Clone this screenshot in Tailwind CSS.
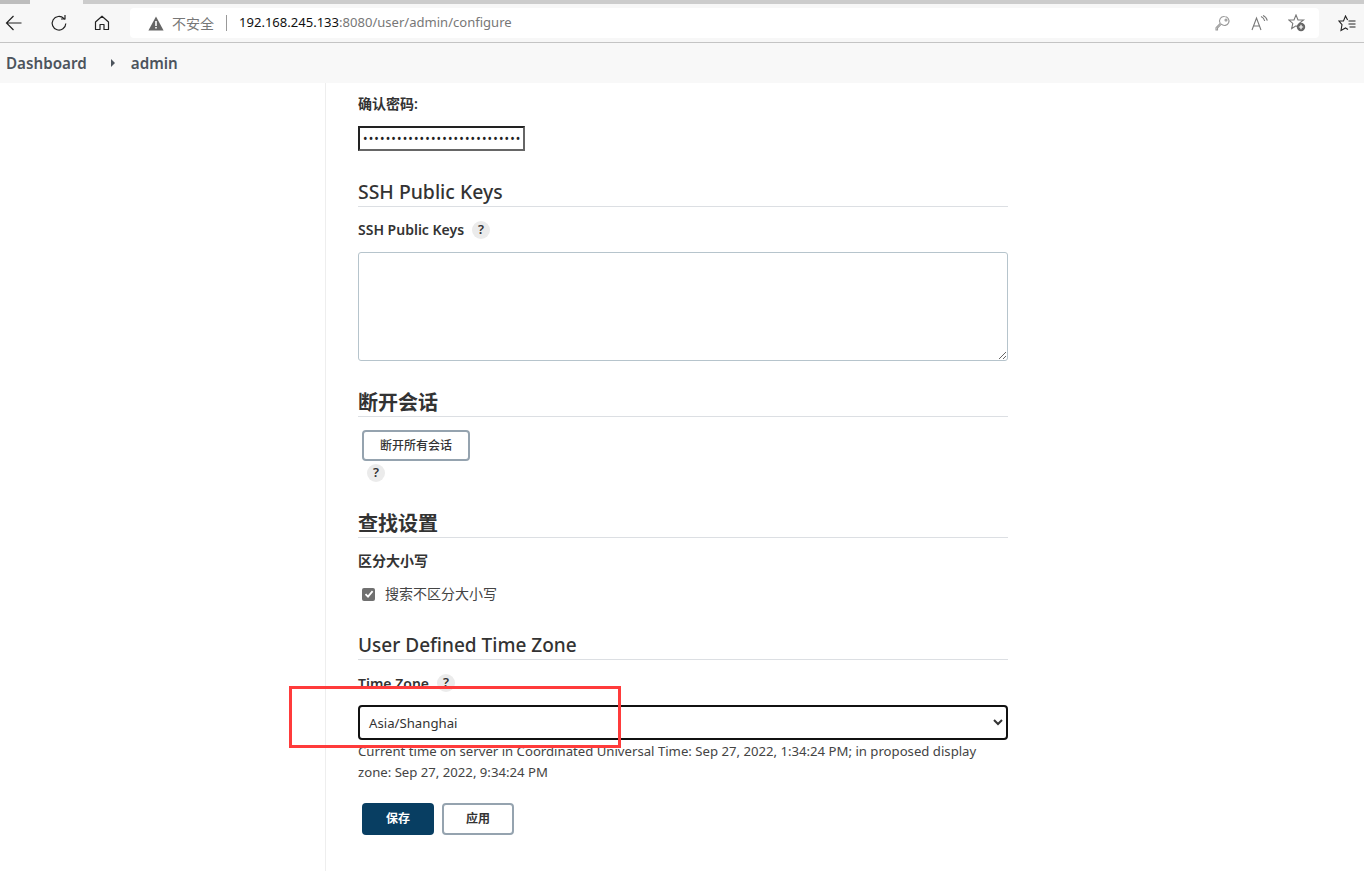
<!DOCTYPE html>
<html lang="zh-CN">
<head>
<meta charset="utf-8">
<title>admin configure</title>
<script src="https://cdn.jsdelivr.net/npm/@tailwindcss/browser@4"></script>
</head>
<body class="relative h-[871px] w-[1364px] overflow-hidden bg-white font-['Noto_Sans','Noto_Sans_CJK_SC',sans-serif] text-[#333]">
<!-- tab strip -->
<div class="flex h-[4px] bg-[#cccccc]">
  <div class="w-[30px] bg-[#bdbdbd]"></div>
  <div class="w-[53px] bg-[#f7f7f7]"></div>
</div>
<!-- toolbar -->
<div class="flex h-[39px] items-center border-b border-[#c4c4c4] bg-[#f7f7f7]">
  <div class="flex w-[130px] items-center">
    <svg class="ml-[5px]" width="18" height="18" viewBox="0 0 18 18" fill="none" stroke="#222" stroke-width="1.2"><path d="M1.5 9H16.5M8.5 2L1.5 9L8.5 16"/></svg>
    <svg class="ml-[27px]" width="18" height="18" viewBox="0 0 18 18" fill="none" stroke="#222" stroke-width="1.2"><path d="M15 1V5H11M15.8 9.5A6.8 6.8 0 1 1 13.8 4.4L15 5.5"/></svg>
    <svg class="ml-[26px]" width="16" height="16" viewBox="0 0 16 16" fill="none" stroke="#222" stroke-width="1.2"><path d="M1.5 7L8 1.2L14.5 7V14.5H10V9.5H6V14.5H1.5Z" stroke-linejoin="round"/></svg>
  </div>
  <div class="flex h-[30px] w-[1189px] items-center rounded-[4px] bg-white text-[13px]">
    <svg class="ml-[18px]" width="16" height="15" viewBox="0 0 16 15"><path d="M8 0.5L15.6 14.5H0.4Z" fill="#666"/><path d="M7.2 5H8.8V10H7.2ZM7.2 11H8.8V12.6H7.2Z" fill="#fff"/></svg>
    <span class="ml-[8px] text-[14px] text-[#777]">不安全</span>
    <span class="ml-[12px] h-[16px] w-px bg-[#999]"></span>
    <span class="ml-[12px] text-[13.05px] text-[#111]">192.168.245.133<span class="text-[#777]">:8080/user/admin/configure</span></span>
    <div class="ml-auto mr-[13px] flex items-center gap-[20px]">
      <svg width="16" height="16" viewBox="0 0 16 16" fill="none" stroke="#999" stroke-width="1.1"><path d="M9.5 1.5A4.5 4.5 0 1 1 6.3 9.2L2.5 13V15H1V12.7L5.2 8.3A4.5 4.5 0 0 1 9.5 1.5Z"/><circle cx="11" cy="5" r="1"/></svg>
      <svg width="17" height="16" viewBox="0 0 17 16" fill="none" stroke="#777" stroke-width="1.1"><path d="M1 15L5.5 3L10 15M2.6 11H8.4M10 1.5C12 2.3 13.3 4 13.7 6M12 0.5C14.3 1.5 15.8 3.5 16.3 5.6"/></svg>
      <svg width="18" height="18" viewBox="0 0 18 18" fill="none"><path d="M8 1L10 6H15.5L11.2 9.4L12.3 14.5L8 11.8L3.7 14.5L4.8 9.4L0.8 6H6Z" stroke="#777" stroke-width="1.1"/><circle cx="13" cy="13" r="4.2" fill="#666"/><path d="M13 10.8V15.2M10.8 13H15.2" stroke="#fff" stroke-width="1.2"/></svg>
    </div>
  </div>
  <svg class="ml-[19px]" width="18" height="17" viewBox="0 0 18 17" fill="none" stroke="#222" stroke-width="1.1"><path d="M9.6 5L7.5 1L5.5 6H1L4 9.6L3 15.5L7.5 13L10 14.5"/><path d="M10.5 6H17.5M10.5 9H17.5M11.5 12H17.5"/></svg>
</div>
<!-- breadcrumb -->
<nav class="flex h-[40px] items-center bg-[#f8f8f8] pl-[6px] pt-[1px] text-[15.2px] font-semibold text-[#4d545d]">
  <span>Dashboard</span>
  <svg class="ml-[24px] -mt-[1px]" width="4" height="8" viewBox="0 0 4 8"><path d="M0 0L4 4L0 8Z" fill="#4d545d"/></svg>
  <span class="ml-[16px]">admin</span>
</nav>
<!-- main -->
<main class="flex">
  <aside class="h-[788px] w-[326px] shrink-0 border-r border-[#eeeeee]"></aside>
  <section class="ml-[32px] w-[650px] text-[14px]">
    <div class="flex h-[43px] items-center pb-[2px] font-semibold">确认密码:</div>
    <div class="flex h-[25px] w-[167px] items-center overflow-hidden border-2 border-[#222] border-b-[#666] border-r-[#666] pl-[3px] text-[#222]">
      <span class="text-[12px] leading-none tracking-[1.15px]">••••••••••••••••••••••••••••</span>
    </div>
    <h2 class="mt-[28px] flex h-[28px] items-center border-b border-[#dcdfe3] pb-[1px] text-[19.4px] font-medium">SSH Public Keys</h2>
    <div class="mt-[13px] flex h-[20px] items-center gap-[8px] font-semibold"><span class="pb-[2px]">SSH Public Keys</span>
      <span class="flex size-[18px] items-center justify-center rounded-full bg-[#ebebeb] text-[13px] font-semibold text-[#333]">?</span>
    </div>
    <textarea class="mt-[12px] block h-[109px] w-[650px] rounded-[3px] border border-[#b6c4cc] bg-white"></textarea>
    <h2 class="mt-[28px] flex h-[28px] items-center border-b border-[#dcdfe3] text-[20px] font-semibold">断开会话</h2>
    <button class="ml-[4px] mt-[13px] block h-[31px] w-[108px] rounded-[4px] border-2 border-[#95a3af] bg-white text-[12px] font-medium text-[#333]">断开所有会话</button>
    <span class="ml-[9px] mt-[3px] flex size-[18px] items-center justify-center rounded-full bg-[#ebebeb] text-[13px] font-semibold text-[#333]">?</span>
    <h2 class="mt-[28px] flex h-[28px] items-center border-b border-[#dcdfe3] text-[20px] font-semibold">查找设置</h2>
    <div class="mt-[13px] flex h-[20px] items-center pb-[2px] font-semibold">区分大小写</div>
    <label class="mt-[13px] flex h-[20px] items-center pl-[4px] text-[#444]">
      <span class="flex size-[13px] items-center justify-center rounded-[2px] bg-[#707070]">
        <svg width="10" height="10" viewBox="0 0 10 10" fill="none" stroke="#fff" stroke-width="1.8"><path d="M1.5 5.2L4 7.6L8.6 2.2"/></svg>
      </span>
      <span class="ml-[10px] pb-[2px]">搜索不区分大小写</span>
    </label>
    <h2 class="mt-[28px] flex h-[28px] items-center border-b border-[#dcdfe3] pb-[1px] text-[19.05px] font-medium">User Defined Time Zone</h2>
    <div class="mt-[13px] flex h-[20px] items-center gap-[8px] font-semibold"><span>Time Zone</span>
      <span class="flex size-[18px] items-center justify-center rounded-full bg-[#ebebeb] text-[13px] font-semibold text-[#333]">?</span>
    </div>
    <div class="mt-[12px] flex h-[35px] items-center justify-between rounded-[4px] border-2 border-[#111] pl-[9px] pr-[3px] text-[13.2px]">
      <span class="pt-[2px]">Asia/Shanghai</span>
      <svg width="10" height="7" viewBox="0 0 10 7" fill="none" stroke="#333" stroke-width="2"><path d="M1 1L5 5L9 1"/></svg>
    </div>
    <p class="mt-[1px] w-[640px] text-[13.17px] leading-[21px] text-[#444]">Current time on server in Coordinated Universal Time: Sep 27, 2022, 1:34:24 PM; in proposed display zone: Sep 27, 2022, 9:34:24 PM</p>
    <div class="ml-[4px] mt-[20px] flex gap-[8px]">
      <button class="h-[32px] w-[72px] rounded-[4px] bg-[#083e62] text-[12px] font-semibold text-white">保存</button>
      <button class="h-[32px] w-[72px] rounded-[4px] border-2 border-[#95a3af] bg-white text-[12px] font-semibold text-[#333]">应用</button>
    </div>
  </section>
</main>
<!-- red annotation -->
<div class="absolute left-[289px] top-[686px] h-[62px] w-[332px] border-[3px] border-[#ff3b3b]"></div>
</body>
</html>
